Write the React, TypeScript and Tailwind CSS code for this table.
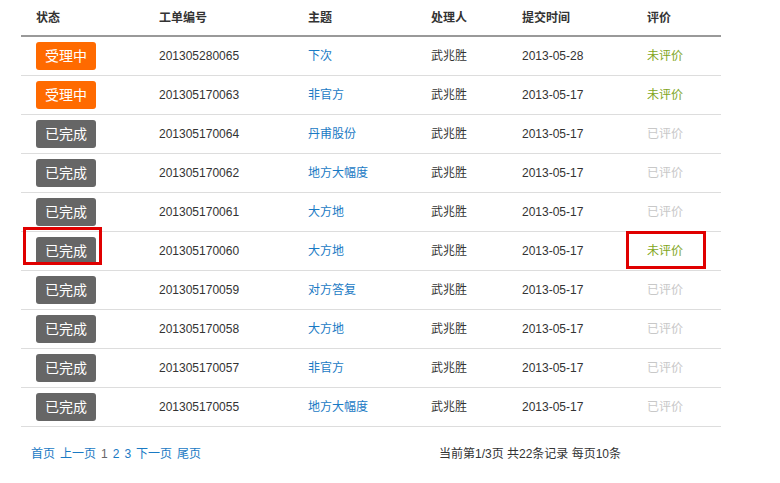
import React from "react";

type Row = {
  status: "doing" | "done";
  id: string;
  subject: string;
  date: string;
  rated: boolean;
  mark?: boolean;
};

const rows: Row[] = [
  { status: "doing", id: "201305280065", subject: "下次", date: "2013-05-28", rated: false },
  { status: "doing", id: "201305170063", subject: "非官方", date: "2013-05-17", rated: false },
  { status: "done", id: "201305170064", subject: "丹甫股份", date: "2013-05-17", rated: true },
  { status: "done", id: "201305170062", subject: "地方大幅度", date: "2013-05-17", rated: true },
  { status: "done", id: "201305170061", subject: "大方地", date: "2013-05-17", rated: true },
  { status: "done", id: "201305170060", subject: "大方地", date: "2013-05-17", rated: false, mark: true },
  { status: "done", id: "201305170059", subject: "对方答复", date: "2013-05-17", rated: true },
  { status: "done", id: "201305170058", subject: "大方地", date: "2013-05-17", rated: true },
  { status: "done", id: "201305170057", subject: "非官方", date: "2013-05-17", rated: true },
  { status: "done", id: "201305170055", subject: "地方大幅度", date: "2013-05-17", rated: true },
];

const cols = "grid grid-cols-[123px_149px_123px_91px_125px_89px]";

export default function App() {
  return (
    <div
      className="w-[780px] h-[483px] bg-white text-[12px] text-[#333]"
      style={{ fontFamily: '"Liberation Sans", Arial, "Noto Sans CJK SC", sans-serif' }}
    >
      <div className="ml-[21px] w-[700px]">
        <div className={`${cols} h-[37px] items-center border-b-2 border-[#999] font-bold pl-[15px]`}>
          <div>状态</div>
          <div>工单编号</div>
          <div>主题</div>
          <div>处理人</div>
          <div>提交时间</div>
          <div>评价</div>
        </div>
        {rows.map((r, i) => (
          <div key={i} className={`${cols} h-[39px] items-center border-b border-[#ddd] pl-[15px]`}>
            <div className="relative">
              <span
                className={`inline-flex w-[60px] h-[28px] items-center justify-center rounded-[3px] text-white text-[14px] ${
                  r.status === "doing" ? "bg-[#ff6a00]" : "bg-[#666]"
                }`}
              >
                {r.status === "doing" ? "受理中" : "已完成"}
              </span>
              {r.mark && (
                <div className="absolute left-[-13px] top-[-10px] w-[79px] h-[38px] border-[3px] border-[#e00000]" />
              )}
            </div>
            <div>{r.id}</div>
            <div className="text-[#1a7ac4]">{r.subject}</div>
            <div>武兆胜</div>
            <div>{r.date}</div>
            <div className="relative">
              <span className={r.rated ? "text-[#c8c8c8]" : "text-[#7fa61c]"}>{r.rated ? "已评价" : "未评价"}</span>
              {r.mark && (
                <div className="absolute left-[-21px] top-[-11px] w-[80px] h-[38px] border-[3px] border-[#e00000]" />
              )}
            </div>
          </div>
        ))}
        <div className="flex h-[53px] items-center">
          <div className="ml-[10px] w-[408px] flex gap-[5px] text-[#1a7ac4]">
            <span>首页</span>
            <span>上一页</span>
            <span className="text-[#666]">1</span>
            <span>2</span>
            <span>3</span>
            <span>下一页</span>
            <span>尾页</span>
          </div>
          <div className="text-[#333]">当前第1/3页 共22条记录 每页10条</div>
        </div>
      </div>
    </div>
  );
}
